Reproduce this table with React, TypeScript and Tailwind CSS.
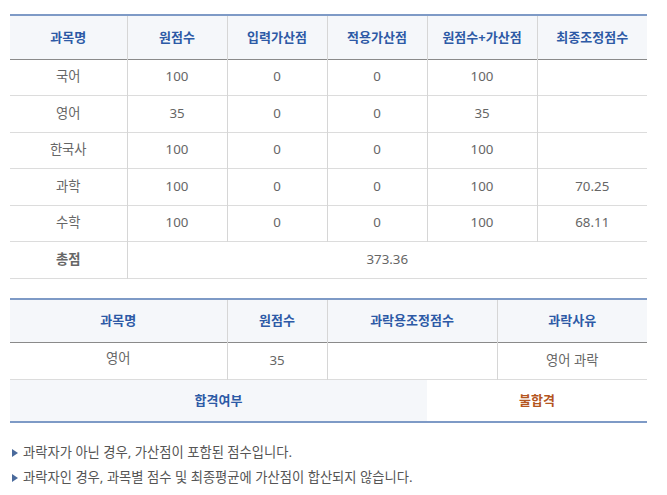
const font = { fontFamily: '"Noto Sans", "Noto Sans CJK KR", sans-serif' };

const rows = [
  { name: "국어", raw: "100", input: "0", applied: "0", sum: "100", final: "" },
  { name: "영어", raw: "35", input: "0", applied: "0", sum: "35", final: "" },
  { name: "한국사", raw: "100", input: "0", applied: "0", sum: "100", final: "" },
  { name: "과학", raw: "100", input: "0", applied: "0", sum: "100", final: "70.25" },
  { name: "수학", raw: "100", input: "0", applied: "0", sum: "100", final: "68.11" },
];

const th = "h-[44px] p-0 text-[13px] font-bold text-[#2d5aa6] text-center border-l border-[#d6d6d6] first:border-l-0";
const td = "h-[36.5px] p-0 text-[13.3px] text-[#666] text-center border-l border-[#d6d6d6] first:border-l-0";

export default function App() {
  return (
    <div className="bg-white w-[667px] h-[495px] pt-[14px] px-[10px]" style={font}>
      <table className="w-[637px] border-collapse table-fixed">
        <colgroup>
          <col className="w-[117px]" />
          <col className="w-[100px]" />
          <col className="w-[100px]" />
          <col className="w-[100px]" />
          <col className="w-[110px]" />
          <col className="w-[110px]" />
        </colgroup>
        <thead>
          <tr className="bg-[#f5f7fa] border-t-2 border-t-[#7e9ac6] border-b border-b-[#8a8a8a]">
            <th className={th}>과목명</th>
            <th className={th}>원점수</th>
            <th className={th}>입력가산점</th>
            <th className={th}>적용가산점</th>
            <th className={th}>원점수+가산점</th>
            <th className={th}>최종조정점수</th>
          </tr>
        </thead>
        <tbody>
          {rows.map((r) => (
            <tr key={r.name} className="border-b border-[#dcdcdc]">
              <td className={td}>{r.name}</td>
              <td className={td}>{r.raw}</td>
              <td className={td}>{r.input}</td>
              <td className={td}>{r.applied}</td>
              <td className={td}>{r.sum}</td>
              <td className={td}>{r.final}</td>
            </tr>
          ))}
          <tr className="border-b border-[#dcdcdc]">
            <td className={td + " font-bold"}>총점</td>
            <td className={td} colSpan={5}>373.36</td>
          </tr>
        </tbody>
      </table>

      <table className="w-[637px] border-collapse table-fixed mt-[19px]">
        <colgroup>
          <col className="w-[217px]" />
          <col className="w-[100px]" />
          <col className="w-[100px]" />
          <col className="w-[70px]" />
          <col className="w-[150px]" />
        </colgroup>
        <thead>
          <tr className="bg-[#f5f7fa] border-t-2 border-t-[#7e9ac6] border-b border-b-[#8a8a8a]">
            <th className={th}>과목명</th>
            <th className={th}>원점수</th>
            <th className={th} colSpan={2}>과락용조정점수</th>
            <th className={th}>과락사유</th>
          </tr>
        </thead>
        <tbody>
          <tr className="border-b border-[#dcdcdc]">
            <td className={td + " align-top pt-[6px]"}>영어</td>
            <td className={td}>35</td>
            <td className={td} colSpan={2}></td>
            <td className={td}>영어 과락</td>
          </tr>
          <tr className="border-b-2 border-[#7e9ac6]">
            <th colSpan={3} className="h-[43px] p-0 bg-[#f5f7fa] text-[13px] font-bold text-[#2d5aa6] text-center">
              합격여부
            </th>
            <td colSpan={2} className="h-[43px] p-0 text-[13px] font-bold text-[#b4561f] text-center">
              불합격
            </td>
          </tr>
        </tbody>
      </table>

      <ul className="mt-[21px] flex flex-col gap-[7px] text-[13.3px] text-[#555]">
        <li className="flex items-center gap-[5px] h-[18px]">
          <span className="w-0 h-0 border-y-[4px] border-y-transparent border-l-[6px] border-l-[#4a6a9c] ml-[2px]" />
          과락자가 아닌 경우, 가산점이 포함된 점수입니다.
        </li>
        <li className="flex items-center gap-[5px] h-[18px]">
          <span className="w-0 h-0 border-y-[4px] border-y-transparent border-l-[6px] border-l-[#4a6a9c] ml-[2px]" />
          과락자인 경우, 과목별 점수 및 최종평균에 가산점이 합산되지 않습니다.
        </li>
      </ul>
    </div>
  );
}
